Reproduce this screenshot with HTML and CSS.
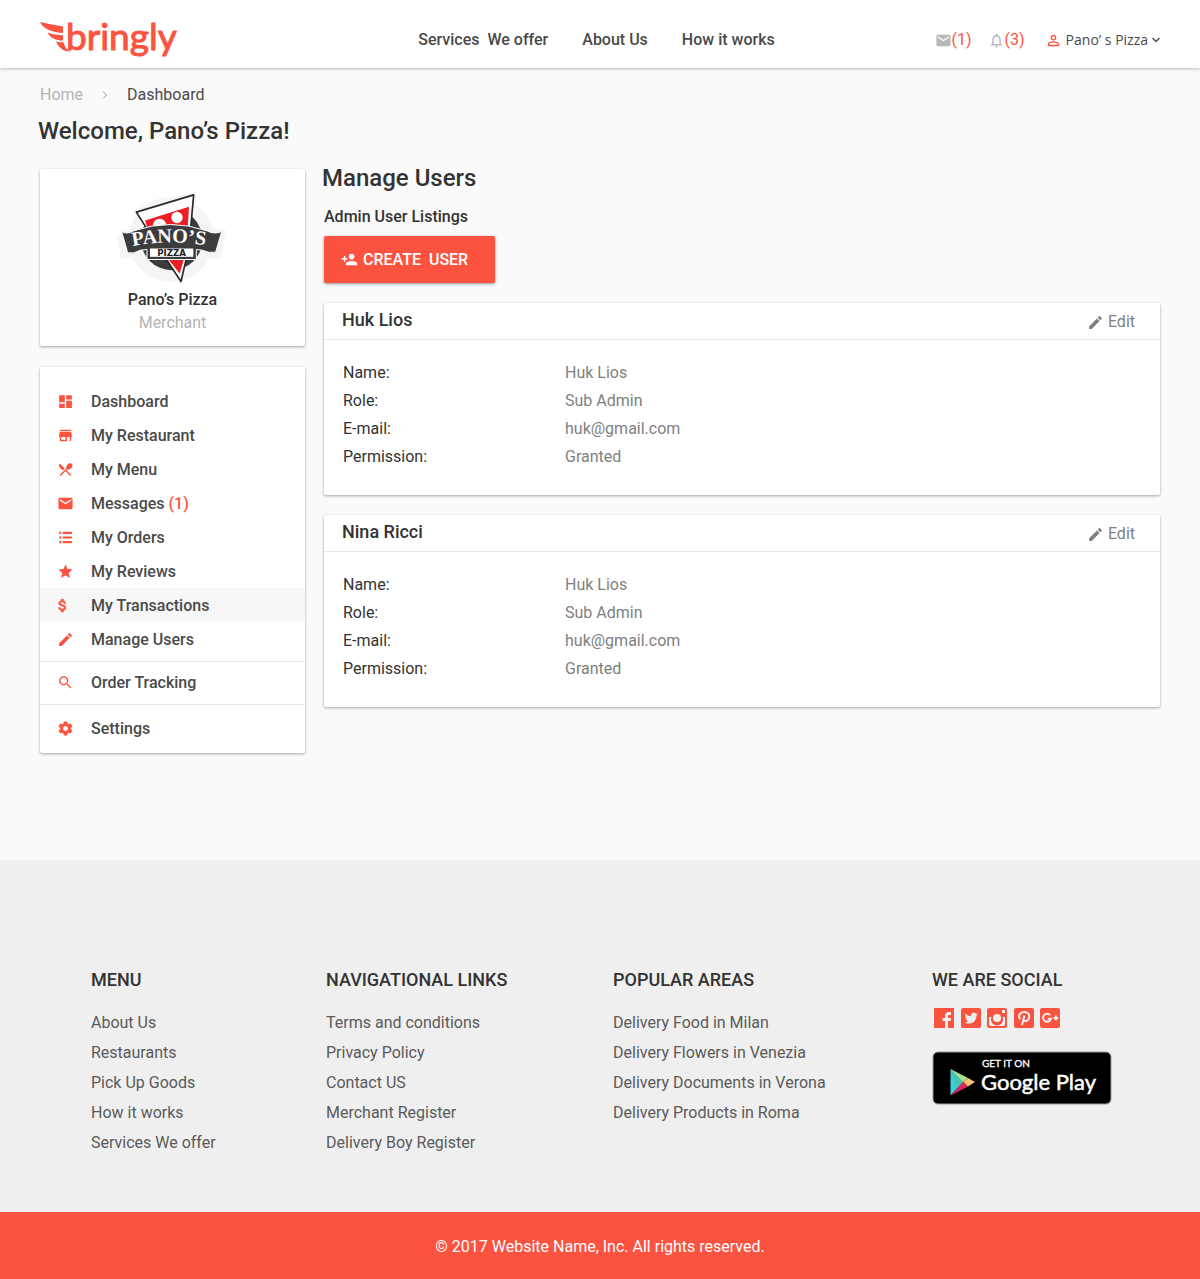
FILE: index.html
```html
<!DOCTYPE html>
<html lang="en">
<head>
<meta charset="utf-8">
<meta name="viewport" content="width=device-width, initial-scale=1">
<title>Bringly – Manage Users</title>
<link rel="stylesheet" href="styles.css">
</head>
<body>
<svg class="sprite" aria-hidden="true">
  <symbol id="mail" viewBox="0 0 24 24"><path d="M20 4H4c-1.1 0-1.99.9-1.99 2L2 18c0 1.1.9 2 2 2h16c1.1 0 2-.9 2-2V6c0-1.1-.9-2-2-2zm0 4l-8 5-8-5V6l8 5 8-5v2z"/></symbol>
  <symbol id="edit" viewBox="0 0 24 24"><path d="M3 17.25V21h3.75L17.81 9.94l-3.75-3.75L3 17.25zM20.71 7.04c.39-.39.39-1.02 0-1.41l-2.34-2.34c-.39-.39-1.02-.39-1.41 0l-1.83 1.83 3.75 3.75 1.83-1.83z"/></symbol>
</svg>

<header class="topbar">
  <a class="logo" href="#" aria-label="bringly">
    <svg width="144" height="52" viewBox="0 0 144 52">
      <path d="M0 14C8 15.500 16 17.500 23 18.500L23 25C15 24.500 4 22.500 0 14Z"/>
      <path d="M7.500 24.500C12 26.500 18 27 23 27.200L23 32.500C16 32.500 10 30 7.500 24.500Z"/>
      <path d="M16 33.500C18 34.200 21 34.300 23.500 34.200C24.500 39 27 42 31 43.500C23 44 18.500 39 16 33.500Z"/>
      <text x="26" y="42">bringly</text>
    </svg>
  </a>
  <nav class="mainnav">
    <a href="#">Services&nbsp; We offer</a>
    <a href="#">About Us</a>
    <a href="#">How it works</a>
  </nav>
  <div class="account">
    <a class="counter" href="#" aria-label="Messages"><svg class="icon"><use href="#mail"/></svg>(1)</a>
    <a class="counter" href="#" aria-label="Notifications"><svg class="icon" viewBox="0 0 24 24"><path d="M12 22c1.100 0 2-.9 2-2h-4c0 1.100.9 2 2 2zm6-6v-5c0-3.070-1.640-5.640-4.500-6.320V4c0-.83-.67-1.500-1.500-1.500s-1.500.67-1.500 1.500v.68C7.630 5.360 6 7.920 6 11v5l-2 2v1h16v-1l-2-2zm-2 1H8v-6c0-2.480 1.510-4.500 4-4.500s4 2.020 4 4.500v6z"/></svg>(3)</a>
    <button class="usermenu" type="button">
      <svg class="icon" viewBox="0 0 24 24"><path d="M12 5.900a2.100 2.100 0 1 1 0 4.200 2.100 2.100 0 0 1 0-4.200m0 9c2.970 0 6.100 1.460 6.100 2.100v1.100H5.900V17c0-.64 3.130-2.100 6.100-2.100M12 4C9.790 4 8 5.790 8 8s1.790 4 4 4 4-1.790 4-4-1.790-4-4-4zm0 9c-2.670 0-8 1.340-8 4v3h16v-3c0-2.660-5.330-4-8-4z"/></svg>
      <span>Pano’ s Pizza</span>
      <svg class="caret" viewBox="0 0 8 6"><path d="M.5 1 4 4.500 7.500 1"/></svg>
    </button>
  </div>
</header>

<div class="page">
  <nav class="breadcrumb" aria-label="Breadcrumb">
    <a href="#">Home</a>
    <svg viewBox="0 0 6 10"><path d="M1 1.500 4.500 5 1 8.500"/></svg>
    <span>Dashboard</span>
  </nav>
  <h1>Welcome, Pano’s Pizza!</h1>

  <div class="columns">
    <aside class="sidebar">
      <section class="card profile">
        <svg width="110" height="97" viewBox="53 30 330 290" role="img" aria-label="Pano's Pizza logo">
          <g class="halo">
            <circle cx="212" cy="178" r="128"/>
            <path d="M50 166 100 140H320L376 150 362 236H62Z"/>
            <path d="M98 88 286 34 280 240 240 316Z"/>
          </g>
          <circle class="dark" cx="214" cy="178" r="92"/>
          <path class="slice" d="M108 96 280 44 266 200 242 304 214 262Z"/>
          <path class="sauce" d="M134 121 266 80 258 212 238 280 150 170Z"/>
          <circle class="cheese" cx="230" cy="112" r="17"/>
          <circle class="cheese" cx="178" cy="136" r="20"/>
          <path class="banner" d="M64 154Q80 164 100 152Q210 114 320 152Q342 164 364 154L346 216Q326 220 306 210L288 208V238H140V208L120 210Q100 222 82 218Z"/>
          <rect class="plate" x="149" y="205" width="130" height="25"/>
          <path id="arc" class="guide" d="M97 198Q210 176 328 198"/>
          <text class="name"><textPath href="#arc">PANO’S</textPath></text>
          <text class="sub" x="214" y="227">PIZZA</text>
        </svg>
        <strong>Pano’s Pizza</strong>
        <span>Merchant</span>
      </section>

      <nav class="card menu" aria-label="Account">
        <ul>
          <li><a href="#"><svg class="icon" viewBox="0 0 24 24"><path d="M3 13h8V3H3v10zm0 8h8v-6H3v6zm10 0h8V11h-8v10zm0-18v6h8V3h-8z"/></svg><span>Dashboard</span></a></li>
          <li><a href="#"><svg class="icon" viewBox="0 0 24 24"><path d="M20 4H4v2h16V4zm1 10v-2l-1-5H4l-1 5v2h1v6h10v-6h4v6h2v-6h1zm-9 4H6v-4h6v4z"/></svg><span>My Restaurant</span></a></li>
          <li><a href="#"><svg class="icon" viewBox="0 0 24 24"><path d="M8.100 13.340l2.830-2.830L3.910 3.500c-1.560 1.560-1.560 4.090 0 5.660l4.190 4.180zm6.780-1.810c1.530.71 3.680.21 5.270-1.380 1.910-1.910 2.280-4.650.81-6.120-1.460-1.460-4.200-1.100-6.120.81-1.590 1.590-2.090 3.740-1.380 5.270L3.700 19.870l1.410 1.410L12 14.410l6.880 6.880 1.410-1.410L13.410 13l1.470-1.470z"/></svg><span>My Menu</span></a></li>
          <li><a href="#"><svg class="icon"><use href="#mail"/></svg><span>Messages <em>(1)</em></span></a></li>
          <li><a href="#"><svg class="icon" viewBox="0 0 24 24"><path d="M3 4h3v3H3zM8 4h13v3H8zM3 10.500h3v3H3zM8 10.500h13v3H8zM3 17h3v3H3zM8 17h13v3H8z"/></svg><span>My Orders</span></a></li>
          <li><a href="#"><svg class="icon" viewBox="0 0 24 24"><path d="M12 17.270L18.180 21l-1.640-7.030L22 9.240l-7.190-.61L12 2 9.190 8.630 2 9.240l5.460 4.730L5.820 21z"/></svg><span>My Reviews</span></a></li>
          <li><a class="current" href="#"><svg class="icon dollar" viewBox="4 0 24 24"><path d="M11.800 10.900c-2.270-.59-3-1.200-3-2.150 0-1.090 1.010-1.850 2.700-1.850 1.780 0 2.440.85 2.500 2.100h2.210c-.07-1.720-1.120-3.300-3.210-3.810V3h-3v2.160c-1.940.42-3.500 1.680-3.500 3.610 0 2.310 1.910 3.460 4.700 4.130 2.500.6 3 1.480 3 2.410 0 .69-.49 1.790-2.700 1.790-2.060 0-2.870-.92-2.980-2.100h-2.200c.12 2.190 1.760 3.420 3.680 3.830V21h3v-2.150c1.950-.37 3.500-1.500 3.500-3.550 0-2.840-2.430-3.810-4.700-4.400z"/></svg><span>My Transactions</span></a></li>
          <li><a href="#"><svg class="icon"><use href="#edit"/></svg><span>Manage Users</span></a></li>
        </ul>
        <ul>
          <li><a href="#"><svg class="icon" viewBox="0 0 24 24"><path d="M15.500 14h-.79l-.28-.27C15.410 12.590 16 11.110 16 9.500 16 5.910 13.090 3 9.500 3S3 5.910 3 9.500 5.910 16 9.500 16c1.610 0 3.090-.59 4.230-1.570l.27.28v.79l5 4.990L20.490 19l-4.990-5zm-6 0C7.010 14 5 11.990 5 9.500S7.010 5 9.500 5 14 7.010 14 9.500 11.990 14 9.500 14z"/></svg><span>Order Tracking</span></a></li>
        </ul>
        <ul>
          <li><a href="#"><svg class="icon" viewBox="0 0 24 24"><path d="M19.430 12.980c.04-.32.07-.64.07-.98s-.03-.66-.07-.98l2.110-1.650c.19-.15.24-.42.12-.64l-2-3.460c-.12-.22-.39-.3-.61-.22l-2.490 1c-.52-.4-1.080-.73-1.690-.98l-.38-2.650C14.460 2.180 14.250 2 14 2h-4c-.25 0-.46.18-.49.42l-.38 2.650c-.61.25-1.170.59-1.690.98l-2.490-1c-.23-.09-.49 0-.61.22l-2 3.460c-.13.22-.07.49.12.64l2.110 1.650c-.04.32-.07.65-.07.98s.03.66.07.98l-2.110 1.650c-.19.15-.24.42-.12.64l2 3.460c.12.22.39.3.61.22l2.490-1c.52.4 1.080.73 1.690.98l.38 2.650c.03.24.24.42.49.42h4c.25 0 .46-.18.49-.42l.38-2.650c.61-.25 1.170-.59 1.690-.98l2.490 1c.23.09.49 0 .61-.22l2-3.460c.12-.22.07-.49-.12-.64l-2.110-1.650zM12 15.500c-1.930 0-3.500-1.570-3.500-3.500s1.570-3.500 3.500-3.500 3.500 1.570 3.500 3.500-1.570 3.500-3.500 3.500z"/></svg><span>Settings</span></a></li>
        </ul>
      </nav>
    </aside>

    <main class="content">
      <h2>Manage Users</h2>
      <h3>Admin User Listings</h3>
      <button class="create" type="button">
        <svg class="icon" viewBox="0 0 24 24"><path d="M15 12c2.210 0 4-1.790 4-4s-1.790-4-4-4-4 1.790-4 4 1.790 4 4 4zm-9-2V7H4v3H1v2h3v3h2v-3h3v-2H6zm9 4c-2.670 0-8 1.340-8 4v2h16v-2c0-2.660-5.330-4-8-4z"/></svg>CREATE&nbsp; USER</button>

      <article class="card user">
        <header>
          <h4>Huk Lios</h4>
          <button type="button"><svg class="icon"><use href="#edit"/></svg>Edit</button>
        </header>
        <dl>
          <dt>Name:</dt><dd>Huk Lios</dd>
          <dt>Role:</dt><dd>Sub Admin</dd>
          <dt>E-mail:</dt><dd>huk@gmail.com</dd>
          <dt>Permission:</dt><dd>Granted</dd>
        </dl>
      </article>

      <article class="card user">
        <header>
          <h4>Nina Ricci</h4>
          <button type="button"><svg class="icon"><use href="#edit"/></svg>Edit</button>
        </header>
        <dl>
          <dt>Name:</dt><dd>Huk Lios</dd>
          <dt>Role:</dt><dd>Sub Admin</dd>
          <dt>E-mail:</dt><dd>huk@gmail.com</dd>
          <dt>Permission:</dt><dd>Granted</dd>
        </dl>
      </article>
    </main>
  </div>
</div>

<footer>
  <div class="links">
    <section>
      <h5>MENU</h5>
      <ul>
        <li><a href="#">About Us</a></li>
        <li><a href="#">Restaurants</a></li>
        <li><a href="#">Pick Up Goods</a></li>
        <li><a href="#">How it works</a></li>
        <li><a href="#">Services We offer</a></li>
      </ul>
    </section>
    <section>
      <h5>NAVIGATIONAL LINKS</h5>
      <ul>
        <li><a href="#">Terms and conditions</a></li>
        <li><a href="#">Privacy Policy</a></li>
        <li><a href="#">Contact US</a></li>
        <li><a href="#">Merchant Register</a></li>
        <li><a href="#">Delivery Boy Register</a></li>
      </ul>
    </section>
    <section>
      <h5>POPULAR AREAS</h5>
      <ul>
        <li><a href="#">Delivery Food in Milan</a></li>
        <li><a href="#">Delivery Flowers in Venezia</a></li>
        <li><a href="#">Delivery Documents in Verona</a></li>
        <li><a href="#">Delivery Products in Roma</a></li>
      </ul>
    </section>
    <section>
      <h5>WE ARE SOCIAL</h5>
      <div class="social">
        <a href="#" aria-label="Facebook"><svg viewBox="0 0 20 20"><path class="tile" d="M0 0h20v20H0z"/><path class="mark" d="M11 20v-7H8.500v-3H11V8c0-2.700 1.500-4 4-4h2v3h-1.500C14.500 7 14 7.500 14 8.300V10h3l-.4 3H14v7z"/></svg></a>
        <a href="#" aria-label="Twitter"><svg viewBox="0 0 20 20"><rect class="tile" width="20" height="20" rx="2"/><path class="mark" d="M16.800 6.100c-.5.200-1 .4-1.500.4.500-.3.900-.8 1.200-1.400-.5.300-1.100.5-1.700.6A2.700 2.700 0 0 0 10.100 8.200C7.900 8.100 5.900 7 4.600 5.400c-.7 1.200-.4 2.800.8 3.600-.4 0-.8-.1-1.200-.3 0 1.300.9 2.400 2.200 2.700-.4.100-.8.100-1.200 0 .3 1.100 1.400 1.900 2.500 1.900-1.100.9-2.500 1.300-4 1.100 4.800 3 11.700.2 11.800-6.900.5-.4 1-.8 1.300-1.400z"/></svg></a>
        <a href="#" aria-label="Instagram"><svg viewBox="0 0 20 20"><rect class="tile" width="20" height="20" rx="2"/><path class="mark" d="M2 9h2.500a6 6 0 1 0 11 0H18v7c0 1.200-.8 2-2 2H4c-1.200 0-2-.8-2-2zM15 2h3v3h-3z"/><circle class="mark" cx="10" cy="10" r="4"/></svg></a>
        <a href="#" aria-label="Pinterest"><svg viewBox="0 0 20 20"><rect class="tile" width="20" height="20" rx="2"/><path class="line" d="M6.300 11.200C3.300 7.500 6.200 4 10.200 4c3.300 0 5.300 2 5 4.800-.3 3.200-2.500 4.700-4.300 4.200-1-.2-1.600-.9-1.600-1.500M10.400 7.500 8 17"/></svg></a>
        <a href="#" aria-label="Google Plus"><svg viewBox="0 0 20 20"><rect class="tile" width="20" height="20" rx="2"/><path class="line" d="M10.200 7.200A4 4 0 1 0 11 10.700H7.500M13.300 10h5M15.800 7.500v5"/></svg></a>
      </div>
      <a class="play" href="#" aria-label="Get it on Google Play">
        <svg viewBox="0 0 180 54">
          <rect class="badge" x="1" y="1" width="178" height="52" rx="5"/>
          <path fill="#3bcfe0" d="M18.500 18 31 31 18.500 44.500z"/>
          <path fill="#4ac2b0" d="M18.500 18 31 31 25 37.500z"/>
          <path fill="#a6e08a" d="M18.500 18 36 27 31 31z"/>
          <path fill="#fcc074" d="M36 27 43 31 36 35.500 31 31z"/>
          <path fill="#d8285c" d="M18.500 44.500 31 31 36 35.500z"/>
          <text class="small" x="50" y="16">GET IT ON</text>
          <text class="big" x="49" y="39">Google Play</text>
        </svg>
      </a>
    </section>
  </div>
  <p class="copyright">© 2017 Website Name, Inc. All rights reserved.</p>
</footer>
</body>
</html>
```

FILE: styles.css
```css
:root {
  --red: #fc5341;
  --ink: #333;
  --text: #4a4a4a;
  --muted: #808080;
  --pale: #b4b4b4;
  --line: #e8e8e8;
}

* { box-sizing: border-box; }

body {
  margin: 0;
  background: #fafafa;
  color: var(--text);
  font: 16px/20px Roboto, "Liberation Sans", sans-serif;
}

h1, h2, h3, h4, h5, ul, dl, dd, p { margin: 0; padding: 0; }
h1, h2, h3, h4, h5 { color: var(--ink); font-weight: 500; }
ul { list-style: none; }
a { color: inherit; text-decoration: none; }
em { color: var(--red); font-style: normal; }

button {
  border: 0;
  padding: 0;
  background: none;
  color: inherit;
  font: inherit;
  cursor: pointer;
}

.sprite { position: absolute; width: 0; height: 0; }
.icon { flex: none; width: 17px; height: 17px; fill: currentColor; }

/* top bar */
.topbar {
  display: grid;
  grid-template-columns: 1fr auto 1fr;
  align-items: center;
  height: 68px;
  padding: 0 40px;
  background: #fff;
  box-shadow: 0 1px 3px rgba(0, 0, 0, .25);
}

.logo svg { display: block; fill: var(--red); }
.logo text {
  font: 400 37px Lato, sans-serif;
  stroke: var(--red);
  stroke-width: 1px;
  stroke-linejoin: round;
}

.mainnav { display: flex; gap: 34px; margin: 12px 7px 0 0; font-weight: 500; }

.account {
  display: flex;
  justify-content: flex-end;
  align-items: center;
  gap: 16px;
  margin-top: 12px;
}
.counter { display: flex; align-items: center; color: var(--red); }
.counter .icon { fill: #b8b8b8; }

.usermenu {
  display: flex;
  align-items: center;
  gap: 4px;
  margin-left: 4px;
  font: 14px/20px "Open Sans", sans-serif;
}
.usermenu .icon { fill: var(--red); }
.caret { width: 8px; height: 6px; fill: none; stroke: var(--text); stroke-width: 1.5px; }

/* page body */
.page { padding: 17px 40px 107px; }

.breadcrumb { display: flex; align-items: center; gap: 19px; }
.breadcrumb a { color: var(--pale); }
.breadcrumb svg { width: 6px; height: 10px; fill: none; stroke: #999; }

h1, h2 { font-size: 24px; line-height: 32px; }
h1 { margin-top: 10px; }
h1, h2 { margin-left: -2px; }

.columns {
  display: grid;
  grid-template-columns: 265px minmax(0, 1fr);
  align-items: start;
  gap: 19px;
  margin-top: 15px;
}

.card {
  border-radius: 2px;
  background: #fff;
  box-shadow: 0 1px 3px rgba(0, 0, 0, .35);
}

.sidebar { display: grid; gap: 21px; padding-top: 7px; }

.profile {
  display: flex;
  flex-direction: column;
  align-items: center;
  gap: 3px;
  padding: 21px 0 13px;
}
.profile strong { color: var(--ink); font-weight: 500; }
.profile span { color: var(--pale); }
.halo { fill: #f4f6f6; }
.dark, .banner { fill: #3c3c3e; }
.slice { fill: #fff; stroke: #2a2a2c; stroke-width: 5px; stroke-linejoin: round; }
.sauce { fill: #ee1c24; }
.cheese, .plate { fill: #fff; }
.banner { stroke: #fff; stroke-width: 3px; }
.guide { fill: none; }
.profile .name { fill: #fff; font: 700 60px "Liberation Serif", serif; }
.profile .sub { fill: #222; font: 700 26px "DejaVu Sans", sans-serif; text-anchor: middle; }

.menu { padding-top: 17px; font-weight: 500; }
.menu ul { padding-bottom: 5px; }
.menu ul + ul { border-top: 1px solid var(--line); padding: 3px 0 5px; }
.menu ul:last-child { padding: 6px 0 8px; }
.menu a {
  display: flex;
  align-items: center;
  gap: 17px;
  height: 34px;
  padding-left: 17px;
}
.menu span { padding-top: 2px; }
.menu .icon { color: var(--red); }
.menu .dollar { stroke: currentColor; stroke-width: 1px; }
.menu .current { background: #f7f7f7; }

.content { display: flex; flex-direction: column; align-items: stretch; }
h3 { margin-top: 13px; font-size: 16px; line-height: 20px; }

.create {
  display: flex;
  align-items: center;
  align-self: flex-start;
  gap: 5px;
  height: 47px;
  margin-top: 9px;
  padding: 0 27px 0 17px;
  border-radius: 2px;
  background: var(--red);
  box-shadow: 0 1px 3px rgba(0, 0, 0, .4);
  color: #fff;
  font-weight: 500;
}

.user { margin-top: 20px; }
.user header {
  display: flex;
  justify-content: space-between;
  align-items: center;
  height: 37px;
  padding: 0 25px 0 18px;
  border-bottom: 1px solid var(--line);
}
h4 { padding-bottom: 2px; font-size: 18px; line-height: 24px; }
.user button {
  display: flex;
  align-items: center;
  gap: 4px;
  padding-top: 2px;
  color: var(--muted);
}
.user dl {
  display: grid;
  grid-template-columns: 222px 1fr;
  padding: 19px 19px 24px;
  line-height: 28px;
}
dt { color: var(--ink); }
dd { color: var(--muted); }

/* footer */
footer { background: #efefef; }
.links {
  display: grid;
  grid-template-columns: 235fr 287fr 319fr 180fr;
  padding: 108px 88px 54px 91px;
}
h5 { margin-bottom: 16px; font-size: 18px; line-height: 24px; }
.links ul { line-height: 30px; }
.links a { color: #5a5a5a; }

.social { display: flex; justify-content: space-between; width: 126px; margin-left: 2px; }
.social svg { display: block; width: 20px; height: 20px; }
.tile { fill: var(--red); }
.mark { fill: #efefef; }
.line { fill: none; stroke: #efefef; stroke-width: 2px; }

.play svg { display: block; width: 180px; height: 54px; margin-top: 23px; }
.badge { stroke: #999; }
.play text { fill: #fff; }
.play .small { font: 400 10px Lato, sans-serif; stroke: #fff; stroke-width: .3px; }
.play .big { font: 400 22px Lato, sans-serif; stroke: #fff; stroke-width: .5px; }

.copyright {
  padding: 25px 0 22px;
  background: var(--red);
  color: #fff;
  text-align: center;
}
```
